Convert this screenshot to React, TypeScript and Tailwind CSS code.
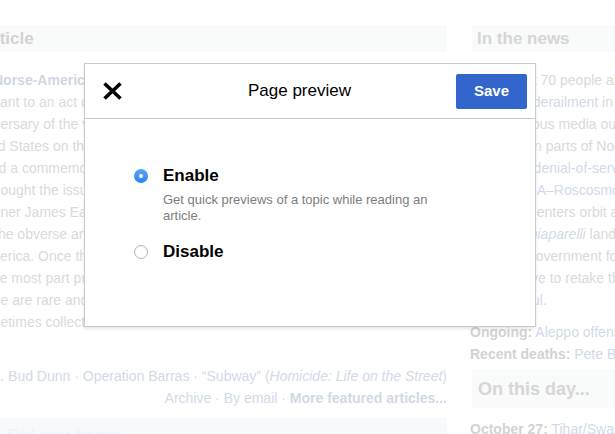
import React from "react";

// faded page behind the dialog
const txt = "text-[#dadada]";
const link = "text-[#d2d9e9]";
const label = "font-bold text-[#d3d3d3]";

const featuredLines = [
  { text: "Norse-American medal", shift: "-ml-[7px]", bold: true },
  { text: "pursuant to an act of Congress", shift: "-ml-[35px]" },
  { text: "anniversary of the voyage", shift: "-ml-[33px]" },
  { text: "United States on the ship", shift: "-ml-[35px]" },
  { text: "and a commemorative", shift: "-ml-[17px]" },
  { text: "brought the issue", shift: "-ml-[12px]" },
  { text: "designer James Earle Fraser", shift: "-ml-[33px]" },
  { text: "the obverse and", shift: "-ml-[6px]" },
  { text: "America. Once the", shift: "-ml-[21px]" },
  { text: "the most part preserved", shift: "-ml-[12px]" },
  { text: "these are rare and", shift: "-ml-[26px]" },
  { text: "sometimes collected", shift: "-ml-[26px]" },
];

function CloseIcon() {
  return (
    <svg width="21" height="20" viewBox="0 0 21 20" fill="none">
      <path d="M2.5 2.5L18.5 17.5M18.5 2.5L2.5 17.5" stroke="#000" strokeWidth="3.6" />
    </svg>
  );
}

function Radio({ checked }: { checked?: boolean }) {
  if (checked) {
    return (
      <div className="mt-[3px] flex h-[14px] w-[14px] shrink-0 items-center justify-center rounded-full bg-gradient-to-b from-[#58a6f7] to-[#2d83ec]">
        <div className="h-[4px] w-[4px] rounded-full bg-white" />
      </div>
    );
  }
  return (
    <div className="mt-[3px] h-[14px] w-[14px] shrink-0 rounded-full border border-[#b4b4b4] bg-white shadow-[inset_0_1px_1px_rgba(0,0,0,0.06)]" />
  );
}

function Dialog() {
  return (
    <div className="absolute left-[84px] top-[63px] flex h-[264px] w-[452px] flex-col border border-[#c8ccd1] bg-white shadow-[0_2px_3px_rgba(0,0,0,0.1)]">
      <div className="flex h-[55px] shrink-0 items-center border-b border-[#c8ccd1]">
        <button className="flex h-full w-[58px] items-center pl-[17px]">
          <CloseIcon />
        </button>
        <div className="flex-1 text-center text-[17px] text-black">Page preview</div>
        <button className="mr-[8px] h-[35px] w-[71px] rounded-[2px] bg-[#3366cc] text-[15px] font-bold text-white">
          Save
        </button>
      </div>

      <div className="pl-[49px] pt-[47px]">
        <div className="flex gap-[15px]">
          <Radio checked />
          <div>
            <div className="text-[17px] font-bold leading-[20px] text-black">Enable</div>
            <div className="mt-[6px] w-[285px] text-[13px] leading-[16px] text-[#7d7d7d]">
              Get quick previews of a topic while reading an article.
            </div>
          </div>
        </div>
        <div className="mt-[18px] flex gap-[15px]">
          <Radio />
          <div className="text-[17px] font-bold leading-[20px] text-black">Disable</div>
        </div>
      </div>
    </div>
  );
}

export default function App() {
  return (
    <div className="relative h-[434px] w-[615px] overflow-hidden bg-white font-['Liberation_Sans',Arial,sans-serif]">
      <div className="flex pt-[25px]">
        {/* left column */}
        <div className="w-[447px] shrink-0 overflow-hidden">
          <div className="h-[27px] whitespace-nowrap bg-[#f9fafa] text-[17px] font-bold leading-[27px] text-[#d3d3d3]">
            <div className="-ml-[199px]">From today’s featured article</div>
          </div>
          <div className="mt-[17px] text-[14px] leading-[22px]">
            {featuredLines.map((l, i) => (
              <div key={i} className={`whitespace-nowrap ${l.shift} ${l.bold ? "font-bold text-[#d0d6e4]" : txt}`}>
                {l.text}
              </div>
            ))}
          </div>
          <div className="mt-[32px] flex justify-end whitespace-nowrap text-[14px] leading-[22px]">
            <span className={txt}>
              Recently featured: <span className={link}>L. Bud Dunn</span> ·{" "}
              <span className={link}>Operation Barras</span> · <span className={link}>“Subway”</span> (
              <i className={link}>Homicide: Life on the Street</i>)
            </span>
          </div>
          <div className="flex justify-end whitespace-nowrap text-[14px] leading-[22px]">
            <span className={txt}>
              <span className={link}>Archive</span> · <span className={link}>By email</span> ·{" "}
              <b className="text-[#d2d8e6]">More featured articles...</b>
            </span>
          </div>
          <div className="mt-[9px] h-[40px] bg-[#f6fafd] pl-[8px] text-[17px] font-bold leading-[36px] text-[#f0f5fa]">
            Did you know...
          </div>
        </div>

        {/* right column */}
        <div className="ml-[23px] w-[145px] shrink-0 overflow-hidden">
          <div className="ml-[2px] h-[27px] whitespace-nowrap bg-[#f9fafa] pl-[5px] text-[17px] font-bold leading-[27px] text-[#d6d6d6]">
            In the news
          </div>
          <ul className={`mt-[17px] list-disc whitespace-nowrap pl-[20px] text-[14px] leading-[22px] ${txt}`}>
            <li>
              <span className="block">At least 70 people are killed in</span>
              <span className="block">
                a train <span className={link}>derailment</span> in Cameroon.
              </span>
            </li>
            <li>
              <span className="block">Numerous media outlets go</span>
              <span className="block">offline in parts of North America</span>
              <span className="block">
                after a <span className={link}>denial-of-service</span> attack.
              </span>
            </li>
            <li>
              <span className="block">
                The <span className={link}>ESA–Roscosmos ExoMars</span>
              </span>
              <span className="block">
                <span className={link}>Orbiter</span> enters orbit around Mars,
              </span>
              <span className="block">
                but <i className={link}>Schiaparelli</i> lander crashes.
              </span>
            </li>
            <li>
              <span className="block">Iraq’s government forces launch an</span>
              <span className="block">
                <span className={link}>offensive</span> to retake the city
              </span>
              <span className="block">
                of <span className={link}>Mosul</span>.
              </span>
            </li>
          </ul>
          <div className="mt-[10px] whitespace-nowrap text-[14px] leading-[22px]">
            <span className={label}>Ongoing:</span> <span className={link}>Aleppo offensive</span>
          </div>
          <div className="whitespace-nowrap text-[14px] leading-[22px]">
            <span className={label}>Recent deaths:</span> <span className={link}>Pete Burns</span>
          </div>
          <div className="ml-[2px] mt-[5px] h-[38px] whitespace-nowrap bg-[#f9fafa] pl-[6px] text-[18px] font-bold leading-[38px] text-[#d6d6d6]">
            On this day...
          </div>
          <div className="mt-[10px] whitespace-nowrap text-[14px] leading-[22px]">
            <span className={label}>October 27:</span> <span className={link}>Tihar/Swanti</span>
          </div>
        </div>
      </div>

      <Dialog />
    </div>
  );
}
